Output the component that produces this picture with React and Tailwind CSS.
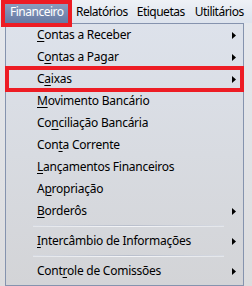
import { Fragment } from 'react'

const ITEMS = [
  { pre: '', key: 'C', post: 'ontas a Receber', sub: true },
  { pre: 'C', key: 'o', post: 'ntas a Pagar', sub: true },
  { pre: 'C', key: 'a', post: 'ixas', sub: true, marked: true },
  { pre: '', key: 'M', post: 'ovimento Bancário' },
  { pre: 'Co', key: 'n', post: 'ciliação Bancária' },
  { pre: 'Con', key: 't', post: 'a Corrente' },
  { pre: '', key: 'L', post: 'ançamentos Financeiros' },
  { pre: 'A', key: 'p', post: 'ropriação' },
  { pre: '', key: 'B', post: 'orderôs', sub: true, sepAfter: true },
  { pre: '', key: 'I', post: 'ntercâmbio de Informações', sub: true, sepAfter: true },
  { pre: 'Cont', key: 'r', post: 'ole de Comissões', sub: true },
]

function Arrow() {
  return (
    <svg width="4" height="7" viewBox="0 0 4 7" className="shrink-0">
      <path d="M0 0 L4 3.5 L0 7 Z" fill="#000" />
    </svg>
  )
}

function Separator() {
  return (
    <div className="h-[8px] flex flex-col justify-center pl-[27px] pr-[19px]">
      <div className="h-px bg-gradient-to-r from-[#d6dae2] via-[#b9bfcc] to-[#d6dae2]" />
      <div className="h-px bg-gradient-to-r from-[#e4e6ea] via-[#f4f5f8] to-[#e4e6ea]" />
    </div>
  )
}

export default function App() {
  return (
    <div className="relative w-[252px] h-[286px] overflow-hidden bg-gradient-to-b from-[#e6e9ee] to-[#dcdcde] font-['Noto_Sans',sans-serif] text-[12px] text-black leading-none">
      <div className="h-[23px] flex items-stretch pl-[4px] bg-gradient-to-b from-[#eef1f6] to-[#dde3ed] tracking-[-0.5px] whitespace-nowrap">
        <div className="w-[66px] pl-[6px] flex items-center text-white bg-gradient-to-b from-[#93a4c4] to-[#6579a3]">Financeiro</div>
        <div className="pl-[6px] pr-[4px] flex items-center">Relatórios</div>
        <div className="px-[5px] flex items-center">Etiquetas</div>
        <div className="px-[5px] flex items-center">Utilitários</div>
      </div>

      <div className="absolute left-[1px] top-0 w-[71px] h-[27px] border-4 border-[#ed1c24]" />

      <div className="ml-[5px] w-[239px] h-[263px] border border-[#8593ae] bg-gradient-to-b from-[#dde2eb] to-[#d3d4d7]">
        {ITEMS.map((it, i) => (
          <Fragment key={i}>
            <div className="relative h-[22px] flex items-center pl-[31px] pr-[7px] tracking-[-0.25px]">
              <span className="flex-1">
                {it.pre}
                <span className="underline underline-offset-[2px] decoration-1">{it.key}</span>
                {it.post}
              </span>
              {it.sub && <Arrow />}
              {it.marked && <div className="absolute left-[-1px] right-[-1px] top-[-2px] bottom-[-2px] border-4 border-[#ed1c24]" />}
            </div>
            {it.sepAfter && <Separator />}
          </Fragment>
        ))}
      </div>
    </div>
  )
}
